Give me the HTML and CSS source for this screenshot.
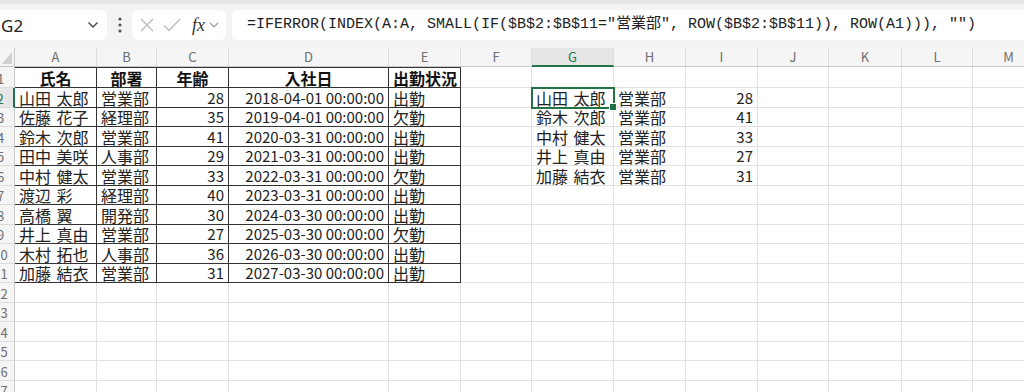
FILE: index.html
```html
<!DOCTYPE html>
<html lang="ja">
<head>
  <meta charset="UTF-8" />
  <title>Book1 - Excel</title>
  <link rel="stylesheet" href="styles.css">
</head>
<body>

  <header class="formula-bar">
    <div class="name-box">
      <span>G2</span>
      <svg class="chev" width="12" height="8" viewBox="0 0 12 8"><path d="M1.5 1.5 L6 6 L10.5 1.5" fill="none" stroke="#444" stroke-width="1.4"/></svg>
    </div>
    <div class="kebab">
      <svg width="4" height="16" viewBox="0 0 4 16"><circle cx="2" cy="2" r="1.6" fill="#555"/><circle cx="2" cy="8" r="1.6" fill="#555"/><circle cx="2" cy="14" r="1.6" fill="#555"/></svg>
    </div>
    <div class="fx-box">
      <svg width="14" height="14" viewBox="0 0 14 14"><path d="M1 1 L13 13 M13 1 L1 13" stroke="#b9b9b9" stroke-width="1.3"/></svg>
      <svg width="18" height="14" viewBox="0 0 18 14"><path d="M1 7.5 L6 12.5 L17 1" fill="none" stroke="#b9b9b9" stroke-width="1.3"/></svg>
      <span class="fx">fx</span>
      <svg width="10" height="6" viewBox="0 0 10 6"><path d="M1 1 L5 5 L9 1" fill="none" stroke="#9a9a9a" stroke-width="1.2"/></svg>
    </div>
    <div class="formula">=IFERROR(INDEX(A:A, SMALL(IF($B$2:$B$11="営業部", ROW($B$2:$B$11)), ROW(A1))), "")</div>
  </header>

  <table class="sheet">
    <colgroup>
      <col class="w-rh"><col class="w-a"><col class="w-b"><col class="w-c"><col class="w-d"><col class="w-e"><col class="w-f">
      <col class="w-g"><col class="w-h"><col class="w-i"><col class="w-j"><col class="w-k"><col class="w-l"><col class="w-m">
    </colgroup>
    <tr class="col-head">
      <th class="corner"><svg width="10" height="12" viewBox="0 0 10 12"><path d="M10 0 L10 12 L0 12 Z" fill="#d0d0d0"/></svg></th>
      <th>A</th><th>B</th><th>C</th><th>D</th><th>E</th><th>F</th><th class="active">G</th><th>H</th><th>I</th><th>J</th><th>K</th><th>L</th><th>M</th>
    </tr>
    <tr class="r1">
      <th class="rh">1</th>
      <td class="t top head">氏名</td><td class="t top head">部署</td><td class="t top head">年齢</td><td class="t top head">入社日</td><td class="t top head">出勤状況</td>
      <td></td><td></td><td></td><td></td><td></td><td></td><td></td><td></td>
    </tr>
    <tr>
      <th class="rh active">2</th>
      <td class="t">山田 太郎</td><td class="t">営業部</td><td class="t num">28</td><td class="t num">2018-04-01 00:00:00</td><td class="t">出勤</td>
      <td></td><td class="sel">山田 太郎</td><td>営業部</td><td class="num">28</td><td></td><td></td><td></td><td></td>
    </tr>
    <tr>
      <th class="rh">3</th>
      <td class="t">佐藤 花子</td><td class="t">経理部</td><td class="t num">35</td><td class="t num">2019-04-01 00:00:00</td><td class="t">欠勤</td>
      <td></td><td>鈴木 次郎</td><td>営業部</td><td class="num">41</td><td></td><td></td><td></td><td></td>
    </tr>
    <tr>
      <th class="rh">4</th>
      <td class="t">鈴木 次郎</td><td class="t">営業部</td><td class="t num">41</td><td class="t num">2020-03-31 00:00:00</td><td class="t">出勤</td>
      <td></td><td>中村 健太</td><td>営業部</td><td class="num">33</td><td></td><td></td><td></td><td></td>
    </tr>
    <tr>
      <th class="rh">5</th>
      <td class="t">田中 美咲</td><td class="t">人事部</td><td class="t num">29</td><td class="t num">2021-03-31 00:00:00</td><td class="t">出勤</td>
      <td></td><td>井上 真由</td><td>営業部</td><td class="num">27</td><td></td><td></td><td></td><td></td>
    </tr>
    <tr>
      <th class="rh">6</th>
      <td class="t">中村 健太</td><td class="t">営業部</td><td class="t num">33</td><td class="t num">2022-03-31 00:00:00</td><td class="t">欠勤</td>
      <td></td><td>加藤 結衣</td><td>営業部</td><td class="num">31</td><td></td><td></td><td></td><td></td>
    </tr>
    <tr>
      <th class="rh">7</th>
      <td class="t">渡辺 彩</td><td class="t">経理部</td><td class="t num">40</td><td class="t num">2023-03-31 00:00:00</td><td class="t">出勤</td>
      <td></td><td></td><td></td><td></td><td></td><td></td><td></td><td></td>
    </tr>
    <tr>
      <th class="rh">8</th>
      <td class="t">高橋 翼</td><td class="t">開発部</td><td class="t num">30</td><td class="t num">2024-03-30 00:00:00</td><td class="t">出勤</td>
      <td></td><td></td><td></td><td></td><td></td><td></td><td></td><td></td>
    </tr>
    <tr>
      <th class="rh">9</th>
      <td class="t">井上 真由</td><td class="t">営業部</td><td class="t num">27</td><td class="t num">2025-03-30 00:00:00</td><td class="t">欠勤</td>
      <td></td><td></td><td></td><td></td><td></td><td></td><td></td><td></td>
    </tr>
    <tr>
      <th class="rh">10</th>
      <td class="t">木村 拓也</td><td class="t">人事部</td><td class="t num">36</td><td class="t num">2026-03-30 00:00:00</td><td class="t">出勤</td>
      <td></td><td></td><td></td><td></td><td></td><td></td><td></td><td></td>
    </tr>
    <tr>
      <th class="rh">11</th>
      <td class="t">加藤 結衣</td><td class="t">営業部</td><td class="t num">31</td><td class="t num">2027-03-30 00:00:00</td><td class="t">出勤</td>
      <td></td><td></td><td></td><td></td><td></td><td></td><td></td><td></td>
    </tr>
    <tr>
      <th class="rh">12</th>
      <td></td><td></td><td></td><td></td><td></td><td></td><td></td><td></td><td></td><td></td><td></td><td></td><td></td>
    </tr>
    <tr>
      <th class="rh">13</th>
      <td></td><td></td><td></td><td></td><td></td><td></td><td></td><td></td><td></td><td></td><td></td><td></td><td></td>
    </tr>
    <tr>
      <th class="rh">14</th>
      <td></td><td></td><td></td><td></td><td></td><td></td><td></td><td></td><td></td><td></td><td></td><td></td><td></td>
    </tr>
    <tr>
      <th class="rh">15</th>
      <td></td><td></td><td></td><td></td><td></td><td></td><td></td><td></td><td></td><td></td><td></td><td></td><td></td>
    </tr>
    <tr>
      <th class="rh">16</th>
      <td></td><td></td><td></td><td></td><td></td><td></td><td></td><td></td><td></td><td></td><td></td><td></td><td></td>
    </tr>
    <tr>
      <th class="rh">17</th>
      <td></td><td></td><td></td><td></td><td></td><td></td><td></td><td></td><td></td><td></td><td></td><td></td><td></td>
    </tr>
  </table>

</body>
</html>
```

FILE: styles.css
```css
* {
  box-sizing: border-box;
}

body {
  margin: 0;
  width: 1024px;
  height: 392px;
  overflow: hidden;
  background-color: #fff;
  font-family: 'Noto Sans', 'Noto Sans CJK JP', sans-serif;
}

/* BARRA DE FORMULAS */
.formula-bar {
  height: 48px;
  display: flex;
  align-items: flex-start;
  padding-top: 6px;
  background-color: #f3f3f3;
  border-top: 4px solid #e6e6e6;
}

.name-box {
  margin-left: -6px;
  width: 113px;
  height: 30px;
  background-color: #fff;
  border-radius: 6px;
  display: flex;
  align-items: center;
  justify-content: space-between;
  padding: 0 8px 0 7px;
  font-size: 17px;
  color: #222;
}

.kebab {
  width: 25px;
  height: 30px;
  display: flex;
  align-items: center;
  justify-content: center;
}

.fx-box {
  width: 94px;
  height: 30px;
  background-color: #fff;
  border-radius: 6px;
  display: flex;
  align-items: center;
  gap: 9px;
  padding-left: 8px;
}

.fx-box .fx {
  font-family: 'Liberation Serif', serif;
  font-style: italic;
  font-size: 18px;
  color: #333;
  margin-left: 2px;
  margin-right: -5px;
}

.formula {
  flex: 1;
  margin-left: 6px;
  height: 30px;
  background-color: #fff;
  border-radius: 6px 0 0 6px;
  padding-left: 15px;
  font-family: 'Liberation Mono', 'Noto Sans CJK JP', monospace;
  font-size: 15px;
  line-height: 30px;
  color: #222;
  white-space: nowrap;
  overflow: hidden;
}

/* HOJA */
.sheet {
  border-collapse: separate;
  border-spacing: 0;
  table-layout: fixed;
  width: 1058px;
  margin-left: -13px;
  font-family: 'Noto Sans CJK JP', sans-serif;
  font-size: 16px;
  color: #222;
}

.w-rh { width: 28px; }
.w-a { width: 82px; }
.w-b { width: 60px; }
.w-c { width: 72px; }
.w-d { width: 160px; }
.w-e { width: 72px; }
.w-f { width: 71px; }
.w-g { width: 82px; }
.w-h { width: 72px; }
.w-i { width: 72px; }
.w-j { width: 71px; }
.w-k { width: 73px; }
.w-l { width: 71px; }
.w-m { width: 72px; }

.sheet tr {
  height: 19.5px;
}

.sheet tr.col-head {
  height: 19px;
}

.sheet tr.r1 {
  height: 21px;
}

.col-head th {
  background-color: #f5f5f5;
  border-right: 1px solid #dcdcdc;
  border-bottom: 1px solid #c8c8c8;
  font-weight: normal;
  font-size: 13px;
  line-height: 16px;
  color: #6e6e6e;
  padding: 0;
}

.col-head th.corner {
  text-align: right;
  vertical-align: bottom;
  padding: 0 2px 2px 0;
  border-right: 1px solid #c8c8c8;
}

.col-head th.corner svg {
  display: block;
  margin-left: auto;
}

.col-head th.active {
  background-color: #e6e6e6;
  color: #217346;
  border-bottom: 2px solid #217346;
}

.rh {
  background-color: #f5f5f5;
  border-right: 1px solid #c8c8c8;
  border-bottom: 1px solid #dcdcdc;
  font-weight: normal;
  font-size: 13px;
  color: #6e6e6e;
  text-align: center;
  vertical-align: bottom;
  line-height: 17px;
  padding: 0;
}

.rh.active {
  color: #217346;
  background-color: #e6e6e6;
  border-right: 2px solid #217346;
}

.sheet td {
  border-right: 1px solid #e1e1e1;
  border-bottom: 1px solid #e1e1e1;
  padding: 0 4px;
  vertical-align: bottom;
  line-height: 18px;
  white-space: nowrap;
  word-spacing: 2px;
}

.sheet td.t {
  border-right-color: #333;
  border-bottom-color: #333;
}

.sheet td.top {
  border-top: 1px solid #333;
}

.sheet td.head {
  text-align: center;
  font-weight: bold;
  color: #111;
}

.sheet td.num {
  text-align: right;
  font-size: 15px;
  word-spacing: 0;
}

.sheet td.sel {
  position: relative;
  outline: 2px solid #217346;
  outline-offset: -1px;
}

.sheet td.sel::after {
  content: '';
  position: absolute;
  right: -4px;
  bottom: -4px;
  width: 6px;
  height: 6px;
  background-color: #217346;
  border: 1px solid #fff;
}
```
